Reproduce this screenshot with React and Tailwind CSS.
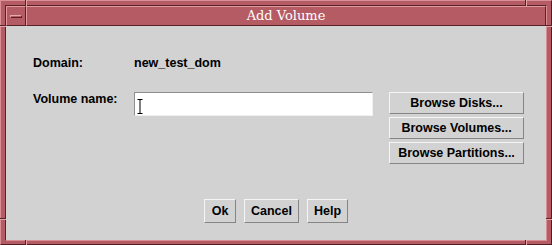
const F = { fontFamily: '"Liberation Sans", Arial, sans-serif' };

function Btn({ children, className = "" }) {
  return (
    <div
      className={`flex items-center justify-center border border-t-[#f5f5f5] border-l-[#f5f5f5] border-r-[#858585] border-b-[#858585] bg-[#d2d2d2] text-[12.5px] font-bold text-black leading-[14px] ${className}`}
      style={F}
    >
      {children}
    </div>
  );
}

function Tick({ className }) {
  return <div className={`absolute ${className}`} />;
}

export default function App() {
  return (
    <div className="relative w-[552px] h-[245px] bg-[#b55b63] border border-t-[#d98d94] border-l-[#d98d94] border-r-[#4f1c21] border-b-[#4f1c21] pt-[4px] pl-[4px] pr-[4px] pb-[3px]">
      {/* resize handle ticks */}
      <Tick className="left-[24px] top-[-1px] w-[1px] h-[6px] bg-[#5a2227]" />
      <Tick className="left-[25px] top-[-1px] w-[1px] h-[6px] bg-[#e2a3a9]" />
      <Tick className="left-[524px] top-[-1px] w-[1px] h-[6px] bg-[#5a2227]" />
      <Tick className="left-[525px] top-[-1px] w-[1px] h-[6px] bg-[#e2a3a9]" />
      <Tick className="left-[24px] bottom-[-1px] w-[1px] h-[5px] bg-[#5a2227]" />
      <Tick className="left-[25px] bottom-[-1px] w-[1px] h-[5px] bg-[#e2a3a9]" />
      <Tick className="left-[524px] bottom-[-1px] w-[1px] h-[5px] bg-[#5a2227]" />
      <Tick className="left-[525px] bottom-[-1px] w-[1px] h-[5px] bg-[#e2a3a9]" />
      <Tick className="left-[-1px] top-[24px] w-[6px] h-[1px] bg-[#5a2227]" />
      <Tick className="left-[-1px] top-[25px] w-[6px] h-[1px] bg-[#e2a3a9]" />
      <Tick className="right-[-1px] top-[24px] w-[6px] h-[1px] bg-[#5a2227]" />
      <Tick className="right-[-1px] top-[25px] w-[6px] h-[1px] bg-[#e2a3a9]" />
      <Tick className="left-[-1px] top-[217px] w-[6px] h-[1px] bg-[#5a2227]" />
      <Tick className="left-[-1px] top-[218px] w-[6px] h-[1px] bg-[#e2a3a9]" />
      <Tick className="right-[-1px] top-[217px] w-[6px] h-[1px] bg-[#5a2227]" />
      <Tick className="right-[-1px] top-[218px] w-[6px] h-[1px] bg-[#e2a3a9]" />

      <div className="w-full h-full flex flex-col border border-t-[#5a2227] border-l-[#5a2227] border-r-[#d98d94] border-b-[#d98d94]">
        {/* title bar */}
        <div className="flex h-[20px] shrink-0">
          <div className="w-[20px] h-[20px] flex items-center justify-center border border-t-[#e29aa1] border-l-[#e29aa1] border-r-[#5a2227] border-b-[#5a2227] bg-[#b55b63]">
            <div className="w-[12px] h-[3px] mt-[1px] border border-t-[#e8a8ae] border-l-[#e8a8ae] border-r-[#5a2227] border-b-[#5a2227] bg-[#b55b63]" />
          </div>
          <div className="flex-1 h-[20px] flex items-center justify-center border border-t-[#e29aa1] border-l-[#e29aa1] border-r-[#5a2227] border-b-[#5a2227] bg-[#b55b63]">
            <span
              className="text-white text-[13px] leading-[18px]"
              style={{ fontFamily: '"DejaVu Serif", "Liberation Serif", serif' }}
            >
              Add Volume
            </span>
          </div>
        </div>

        {/* client */}
        <div className="flex-1 bg-[#d2d2d2] flex flex-col pt-[30px]" style={F}>
          <div className="flex h-[14px] pl-[27px] text-[12.5px] font-bold leading-[14px] text-black">
            <div className="w-[101px]">Domain:</div>
            <div>new_test_dom</div>
          </div>

          <div className="flex mt-[22px] pl-[27px]">
            <div className="w-[101px] text-[12.5px] font-bold leading-[14px] text-black">Volume name:</div>
            <div className="w-[239px] h-[24px] bg-white border border-t-[#8e8e8e] border-l-[#8e8e8e] border-r-[#f0f0f0] border-b-[#f0f0f0] pl-[2px] pt-[6px]">
              <svg width="6" height="15" viewBox="0 0 6 15" className="block">
                <path d="M3 0.5V14.5M0.5 0.5H5.5M0.5 14.5H5.5" stroke="#000" strokeWidth="1" fill="none" />
              </svg>
            </div>
            <div className="ml-[16px] w-[135px] flex flex-col gap-[3px]">
              <Btn className="h-[22px]">Browse Disks...</Btn>
              <Btn className="h-[22px]">Browse Volumes...</Btn>
              <Btn className="h-[22px]">Browse Partitions...</Btn>
            </div>
          </div>

          <div className="flex justify-center gap-[8px] mt-[35px]">
            <Btn className="w-[32px] h-[24px]">Ok</Btn>
            <Btn className="w-[55px] h-[24px]">Cancel</Btn>
            <Btn className="w-[41px] h-[24px]">Help</Btn>
          </div>
        </div>
      </div>
    </div>
  );
}
